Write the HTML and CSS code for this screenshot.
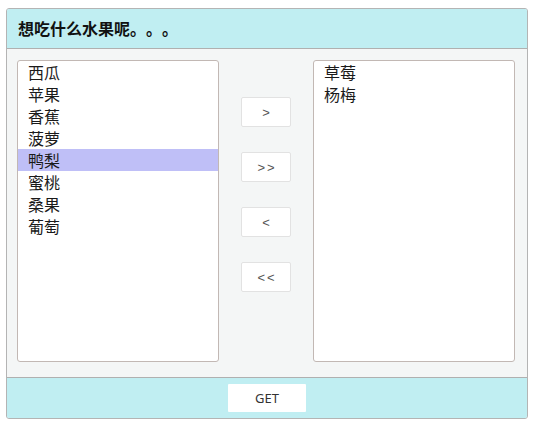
FILE: index.html
```html
<!DOCTYPE html>
<html lang="zh">
<head>
<meta charset="utf-8">
<title>想吃什么水果呢</title>
<link rel="stylesheet" href="styles.css">
</head>
<body>
<div class="panel">
  <div class="panel-head">想吃什么水果呢。。。</div>
  <div class="panel-body">
    <ul class="list">
      <li>西瓜</li>
      <li>苹果</li>
      <li>香蕉</li>
      <li>菠萝</li>
      <li class="selected">鸭梨</li>
      <li>蜜桃</li>
      <li>桑果</li>
      <li>葡萄</li>
    </ul>
    <div class="actions">
      <button class="btn">&gt;</button>
      <button class="btn">&gt;&gt;</button>
      <button class="btn">&lt;</button>
      <button class="btn">&lt;&lt;</button>
    </div>
    <ul class="list">
      <li>草莓</li>
      <li>杨梅</li>
    </ul>
  </div>
  <div class="panel-foot">
    <button class="get">GET</button>
  </div>
</div>
</body>
</html>
```
FILE: styles.css
```css
* { box-sizing: border-box; }
html, body { margin: 0; padding: 0; background: #ffffff; }
body {
  font-family: "Noto Sans CJK SC", "Noto Sans", sans-serif;
  color: #222;
  text-spacing-trim: space-all;
}
.panel {
  margin: 8px 0 0 6px;
  width: 522px;
  border: 1px solid #b4b4b4;
  border-radius: 3px;
  background: #f4f6f6;
  overflow: hidden;
}
.panel-head {
  height: 40px;
  background: #c0eef2;
  border-bottom: 1px solid #b0b0b0;
  padding-left: 11px;
  font-size: 16px;
  font-weight: bold;
  line-height: 39px;
  color: #111;
}
.panel-body {
  display: flex;
  align-items: flex-start;
  padding: 11px 11px 15px 10px;
  height: 328px;
}
.list {
  list-style: none;
  margin: 0;
  padding: 0;
  width: 202px;
  height: 302px;
  background: #fff;
  border: 1px solid #c2b8b4;
  border-radius: 3px;
  font-size: 16px;
  line-height: 22px;
}
.list li {
  padding-left: 10px;
  height: 22px;
  color: #1a1a1a;
}
.list li.selected { background: #bfbff7; }
.actions {
  display: flex;
  flex-direction: column;
  gap: 25px;
  padding-top: 37px;
  margin: 0 22px;
}
.btn {
  width: 50px;
  height: 30px;
  background: #fff;
  border: 1px solid #e2e2e2;
  border-radius: 2px;
  font-family: "Liberation Sans", sans-serif;
  font-size: 13px;
  color: #555;
  padding: 0 0 0 2px;
  letter-spacing: 2px;
}
.panel-foot {
  height: 41px;
  background: #c0eef2;
  border-top: 1px solid #b0b0b0;
  display: flex;
  justify-content: center;
  padding-top: 6px;
}
.get {
  width: 78px;
  height: 28px;
  background: #fff;
  border: none;
  border-radius: 1px;
  font-family: "Noto Sans", sans-serif;
  font-size: 13px;
  color: #333;
  padding: 0;
}
```
